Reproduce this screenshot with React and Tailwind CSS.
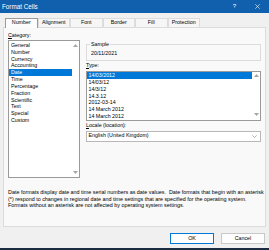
import React from "react";

const Up = () => (
  <svg width="5" height="3" viewBox="0 0 5 3"><path d="M0 3 L2.5 0 L5 3 Z" fill="#a6a6a6" /></svg>
);
const Down = () => (
  <svg width="5" height="3" viewBox="0 0 5 3"><path d="M0 0 L2.5 3 L5 0 Z" fill="#a6a6a6" /></svg>
);

const categories = ["General","Number","Currency","Accounting","Date","Time","Percentage","Fraction","Scientific","Text","Special","Custom"];
const types = ["14/03/2012","14/03/12","14/3/12","14.3.12","2012-03-14","14 March 2012","14 March 2012"];
const tabs = ["Number","Alignment","Font","Border","Fill","Protection"];

export default function App() {
  return (
    <div className="w-[269px] h-[250px] bg-[#f0f0f0] flex flex-col overflow-hidden font-['Liberation_Sans',Arial,sans-serif] text-black">
      {/* title bar */}
      <div className="h-[13px] shrink-0 bg-[#1160ae] flex items-center text-white text-[6.3px] pl-[2px]">
        <span className="leading-[13px]">Format Cells</span>
        <span className="ml-auto text-[6px] leading-[13px]">?</span>
        <svg className="ml-[19px] mr-[9px]" width="5" height="5" viewBox="0 0 5 5">
          <path d="M0.3 0.3 L4.7 4.7 M4.7 0.3 L0.3 4.7" stroke="#ffffff" strokeWidth="0.6" />
        </svg>
      </div>
      {/* tabs */}
      <div className="h-[14px] shrink-0 flex items-end pl-[5px]">
        {tabs.map((t, i) => (
          <div
            key={t}
            className={
              i === 0
                ? "w-[32.5px] h-[10.5px] -mb-px bg-[#fcfcfc] border border-b-0 border-[#9a9a9a] flex items-center justify-center text-[5.3px] relative z-10"
                : "w-[32.5px] h-[9.5px] bg-[#f6f6f6] border border-b-0 border-[#dcdcdc] flex items-center justify-center text-[5.3px]"
            }
          >
            {t}
          </div>
        ))}
      </div>
      {/* panel */}
      <div className="mx-[3px] h-[200px] shrink-0 border border-[#dcdcdc] bg-[#f9f9f9] flex flex-col">
        <div className="flex pl-[4px] gap-[6px]">
          {/* left column */}
          <div className="w-[72px] flex flex-col pt-[3px]">
            <div className="h-[9px] leading-[9px] text-[5.3px]"><span className="underline">C</span>ategory:</div>
            <div className="h-[138px] border border-[#9a9a9a] bg-white flex">
              <div className="flex-1 pt-[0.9px]">
                {categories.map((c) => (
                  <div
                    key={c}
                    className={
                      c === "Date"
                        ? "h-[6.83px] leading-[6.83px] text-[5.3px] pl-[2px] bg-[#0078d7] text-white"
                        : "h-[6.83px] leading-[6.83px] text-[5.3px] pl-[2px]"
                    }
                  >
                    {c}
                  </div>
                ))}
              </div>
              <div className="w-[7px] flex flex-col items-center justify-between pt-[2.5px] pb-[3.5px]">
                <Up />
                <Down />
              </div>
            </div>
          </div>
          {/* right column */}
          <div className="w-[175px] flex flex-col">
            <fieldset className="mt-[12.8px] border border-[#dcdcdc] px-[3px] pb-[3px]">
              <legend className="px-[1px] ml-[0px] text-[5.3px] leading-[7px]">Sample</legend>
              <div className="pt-[2.7px] pl-[1px] text-[5.3px] leading-[7px]">20/11/2021</div>
            </fieldset>
            <div className="mt-[0.7px] h-[7px] leading-[7px] text-[5.3px]"><span className="underline">T</span>ype:</div>
            <div className="mt-[1.8px] h-[50px] border border-[#9a9a9a] bg-white flex">
              <div className="flex-1 pt-[0.3px]">
                {types.map((t, i) => (
                  <div
                    key={i}
                    className={
                      i === 0
                        ? "h-[6.8px] leading-[6.8px] text-[5.3px] pl-[1.5px] bg-[#0078d7] text-white"
                        : "h-[6.8px] leading-[6.8px] text-[5.3px] pl-[1.5px]"
                    }
                  >
                    {t}
                  </div>
                ))}
              </div>
              <div className="w-[8px] flex flex-col items-center justify-between pt-[2.5px] pb-[3.5px]">
                <Up />
                <Down />
              </div>
            </div>
            <div className="mt-[1.5px] h-[7px] leading-[7px] text-[5.3px]"><span className="underline">L</span>ocale (location):</div>
            <div className="mt-[1.2px] h-[11px] border border-[#b8b8b8] bg-white flex items-center pl-[1.5px] pr-[3px]">
              <span className="text-[5.3px]">English (United Kingdom)</span>
              <svg className="ml-auto" width="5" height="3" viewBox="0 0 5 3">
                <path d="M0.3 0.3 L2.5 2.6 L4.7 0.3" fill="none" stroke="#707070" strokeWidth="0.5" />
              </svg>
            </div>
          </div>
        </div>
        <div className="mt-[11.4px] pl-[4px] text-[5.4px] leading-[6.5px] whitespace-pre">
          <div>Date formats display date and time serial numbers as date values.  Date formats that begin with an asterisk</div>
          <div>(*) respond to changes in regional date and time settings that are specified for the operating system.</div>
          <div>Formats without an asterisk are not affected by operating system settings.</div>
        </div>
      </div>
      {/* buttons */}
      <div className="mt-[5.7px] flex justify-end gap-[7px] pr-[4px]">
        <div className="w-[44px] h-[11.6px] border border-[#0078d7] bg-[#fdfdfd] flex items-center justify-center text-[5.3px]">OK</div>
        <div className="w-[44px] h-[11.6px] border border-[#c8c8c8] bg-[#fdfdfd] flex items-center justify-center text-[5.3px]">Cancel</div>
      </div>
      <div className="mt-auto h-[2px] bg-[#1b2a40]" />
    </div>
  );
}
